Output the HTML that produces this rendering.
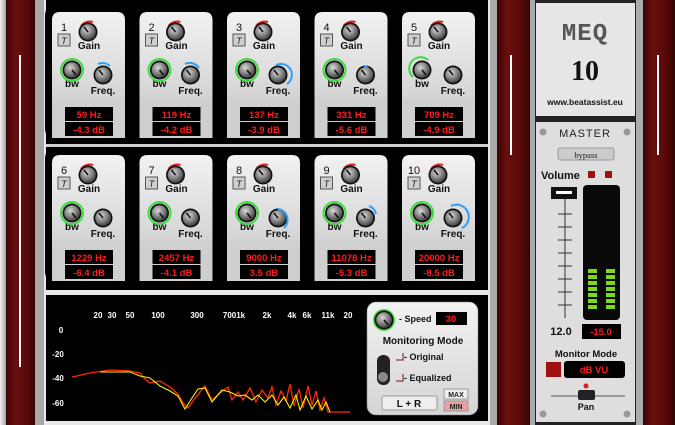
<!DOCTYPE html>
<html><head><meta charset="utf-8"><style>
html,body{margin:0;padding:0;background:#d8d8d8;}
svg{display:block;font-family:"Liberation Sans",Arial,sans-serif;}
.lbl{font-size:10px;font-weight:bold;fill:#111;text-anchor:middle}
.num{font-size:11px;fill:#111;text-anchor:middle}
.red{font-size:9.5px;fill:#ff1a1a;font-weight:bold;text-anchor:middle}
.ax{font-size:8px;fill:#fff;font-weight:bold;text-anchor:middle}
</style></head><body>
<svg width="675" height="425" viewBox="0 0 675 425" xmlns="http://www.w3.org/2000/svg">
<defs>
<linearGradient id="wood" x1="0" x2="1"><stop offset="0" stop-color="#3a0404"/><stop offset=".3" stop-color="#6a0e0e"/><stop offset=".7" stop-color="#5a0a0a"/><stop offset="1" stop-color="#340303"/></linearGradient>
<linearGradient id="metal" x1="0" x2="0" y1="0" y2="1"><stop offset="0" stop-color="#f2f2f2"/><stop offset="1" stop-color="#d4d4d4"/></linearGradient>
<linearGradient id="side" x1="0" x2="1"><stop offset="0" stop-color="#f0f0f0"/><stop offset="1" stop-color="#9a9a9a"/></linearGradient>
<radialGradient id="kn" cx=".4" cy=".35" r=".7"><stop offset="0" stop-color="#d8d8d8"/><stop offset=".6" stop-color="#7a7a7a"/><stop offset="1" stop-color="#3a3a3a"/></radialGradient>
<g id="knob"><circle r="9.5" fill="#111"/><circle r="7.8" fill="url(#kn)"/><line x1="0" y1="0" x2="-4" y2="-5" stroke="#111" stroke-width="1.6"/></g>
<g id="knobr"><circle r="9.5" fill="#111"/><circle r="7.8" fill="url(#kn)"/><line x1="0" y1="0" x2="4" y2="5" stroke="#111" stroke-width="1.6"/></g>
<g id="mod">
<rect x="-7" y="-7" width="88" height="134" rx="10" fill="#000"/>
<path d="M0,86 V8 Q0,0 8,0 H65 Q73,0 73,8 V86 Z" fill="url(#metal)"/>
<rect x="0" y="86" width="73" height="40" fill="#cfcfcf"/>
<rect x="13" y="95" width="48" height="14" fill="#000"/>
<rect x="13" y="110" width="48" height="14" fill="#000"/>
<rect x="6" y="22" width="12" height="12" fill="#d0d0d0" stroke="#555" stroke-width="1"/>
<text x="12" y="32" font-size="9" font-style="italic" text-anchor="middle" fill="#222">T</text>
<path d="M29,14 A11,11 0 0 1 41,10" stroke="#e02020" stroke-width="2" fill="none"/>
<use href="#knob" x="36" y="20"/>
<text class="lbl" x="37" y="37">Gain</text>
<use href="#knobr" x="20" y="58"/>
<text class="lbl" x="20" y="75">bw</text>
<use href="#knob" x="51" y="63"/>
<text class="lbl" x="51" y="82">Freq.</text>
</g>
</defs>

<rect x="0" y="0" width="675" height="425" fill="#d4d4d4"/>
<rect x="0" y="0" width="7" height="425" fill="url(#side)"/>
<rect x="6" y="0" width="29" height="425" fill="url(#wood)"/>
<rect x="35" y="0" width="9" height="425" fill="#a8a8a8"/>
<rect x="19" y="55" width="2" height="312" fill="#fff"/>
<rect x="44" y="0" width="446" height="425" fill="#e8e8e8"/>
<rect x="46" y="0" width="442" height="421" fill="#000"/>
<rect x="46" y="144" width="442" height="3" fill="#cfcfcf"/>
<rect x="46" y="290" width="442" height="5" fill="#e8e8e8"/>
<rect x="490" y="0" width="45" height="425" fill="#aaa"/>
<rect x="497" y="0" width="33" height="425" fill="url(#wood)"/>
<rect x="510" y="55" width="2" height="100" fill="#fff"/>
<rect x="636" y="0" width="39" height="425" fill="#aaa"/>
<rect x="643" y="0" width="32" height="425" fill="url(#wood)"/>
<rect x="657" y="55" width="2" height="100" fill="#fff"/>

<use href="#mod" x="52" y="12"/><use href="#mod" x="139.5" y="12"/><use href="#mod" x="227" y="12"/><use href="#mod" x="314.5" y="12"/><use href="#mod" x="402" y="12"/>
<use href="#mod" x="52" y="155"/><use href="#mod" x="139.5" y="155"/><use href="#mod" x="227" y="155"/><use href="#mod" x="314.5" y="155"/><use href="#mod" x="402" y="155"/>
<g fill="none" stroke="#3ddc3d" stroke-width="2">
<circle cx="72" cy="70" r="11"/><circle cx="159.5" cy="70" r="11"/><circle cx="247" cy="70" r="11"/><circle cx="334.5" cy="70" r="11"/><path d="M413,77 A11,11 0 0 1 428,60"/>
<circle cx="72" cy="213" r="11"/><circle cx="159.5" cy="213" r="11"/><circle cx="247" cy="213" r="11"/><circle cx="334.5" cy="213" r="11"/><circle cx="422" cy="213" r="11"/>
</g>
<g fill="none" stroke="#2aa0ff" stroke-width="2">
<path d="M98,64 A11,11 0 0 1 110,66"/><path d="M185,64 A11,11 0 0 1 199,68"/><path d="M276,65 A11,11 0 0 1 287,84"/><path d="M364,66 A11,11 0 0 1 368,68"/>
<path d="M369,206 A11,11 0 0 1 376,214"/><path d="M278,209 A11,11 0 0 1 284,228"/><path d="M451,206 A11,11 0 0 1 462,228"/>
</g>
<text class="num" x="64" y="31">1</text><text class="num" x="151.5" y="31">2</text><text class="num" x="239" y="31">3</text><text class="num" x="326.5" y="31">4</text><text class="num" x="414" y="31">5</text>
<text class="num" x="64" y="174">6</text><text class="num" x="151.5" y="174">7</text><text class="num" x="239" y="174">8</text><text class="num" x="326.5" y="174">9</text><text class="num" x="414" y="174">10</text>
<text class="red" x="89" y="118">59 Hz</text><text class="red" x="89" y="133">-4.3 dB</text>
<text class="red" x="176.5" y="118">119 Hz</text><text class="red" x="176.5" y="133">-4.2 dB</text>
<text class="red" x="264" y="118">137 Hz</text><text class="red" x="264" y="133">-3.9 dB</text>
<text class="red" x="351.5" y="118">331 Hz</text><text class="red" x="351.5" y="133">-5.6 dB</text>
<text class="red" x="439" y="118">709 Hz</text><text class="red" x="439" y="133">-4.9 dB</text>
<text class="red" x="89" y="261">1229 Hz</text><text class="red" x="89" y="276">-6.4 dB</text>
<text class="red" x="176.5" y="261">2457 Hz</text><text class="red" x="176.5" y="276">-4.1 dB</text>
<text class="red" x="264" y="261">9000 Hz</text><text class="red" x="264" y="276">3.5 dB</text>
<text class="red" x="351.5" y="261">11078 Hz</text><text class="red" x="351.5" y="276">-5.3 dB</text>
<text class="red" x="439" y="261">20000 Hz</text><text class="red" x="439" y="276">-8.5 dB</text>

<text class="ax" x="98" y="318">20</text><text class="ax" x="112" y="318">30</text><text class="ax" x="130" y="318">50</text><text class="ax" x="158" y="318">100</text><text class="ax" x="197" y="318">300</text><text class="ax" x="234" y="318">7001k</text><text class="ax" x="267" y="318">2k</text><text class="ax" x="292" y="318">4k</text><text class="ax" x="307" y="318">6k</text><text class="ax" x="328" y="318">11k</text><text class="ax" x="348" y="318">20</text>
<text class="ax" x="61" y="333">0</text><text class="ax" x="58" y="357">-20</text><text class="ax" x="58" y="381">-40</text><text class="ax" x="58" y="406">-60</text>
<polyline fill="none" stroke="#ff2a00" stroke-width="1.3" points="72,377 90,373 110,370 130,371 140,373 145,379 150,383 160,381 170,387 178,394 183,403 188,408 193,401 200,392 205,386 212,400 220,393 228,387 232,400 238,392 243,400 250,388 256,402 262,390 268,398 272,387 276,405 281,391 286,401 290,384 294,406 299,389 303,408 308,386 312,405 316,391 320,410 324,398 328,412 333,412 350,412"/>
<polyline fill="none" stroke="#ffee00" stroke-width="1.1" points="100,372 130,372 140,376 150,378 160,386 170,391 178,396 185,409 190,401 198,389 205,388 212,402 222,390 230,392 238,396 245,395 252,400 258,395 265,402 272,395 278,405 284,397 290,408 296,395 300,410 306,396 312,409 318,400 322,410 326,402 330,412"/>
<rect x="367" y="302" width="111" height="113" rx="9" fill="url(#metal)" stroke="#888" stroke-width="0.6"/>
<circle cx="384" cy="320" r="10" fill="none" stroke="#3ddc3d" stroke-width="2"/>
<use href="#knobr" x="384" y="320"/>
<text x="399" y="322" font-size="9" font-weight="bold" fill="#111">- Speed</text>
<rect x="436" y="312" width="31" height="13" fill="#000"/>
<text class="red" x="451" y="322">30</text>
<text class="lbl" x="423" y="344" font-size="9">Monitoring Mode</text>
<rect x="377" y="355" width="13" height="30" rx="6" fill="#222"/>
<circle cx="383" cy="377" r="5" fill="#888"/>
<path d="M396,360 H403 V353" stroke="#7a1010" stroke-width="1" fill="none"/>
<text x="404" y="360" font-size="9" font-weight="bold" fill="#111">- Original</text>
<path d="M396,381 H403 V374" stroke="#7a1010" stroke-width="1" fill="none"/>
<text x="404" y="381" font-size="9" font-weight="bold" fill="#111">- Equalized</text>
<rect x="382" y="396" width="55" height="14" rx="2" fill="#eee" stroke="#999"/>
<text class="lbl" x="409" y="407" font-size="9">L + R</text>
<rect x="444" y="389" width="24" height="10" fill="#eee" stroke="#999"/>
<text x="456" y="397" font-size="7" font-weight="bold" text-anchor="middle" fill="#222">MAX</text>
<rect x="444" y="401" width="24" height="10" fill="#e8a0a0" stroke="#999"/>
<text x="456" y="409" font-size="7" font-weight="bold" text-anchor="middle" fill="#222">MIN</text>

<rect x="535" y="0" width="101" height="425" fill="#222"/>
<rect x="536" y="3" width="99" height="113" fill="#e6e6e6"/>
<text x="585" y="40" font-size="24" font-weight="bold" text-anchor="middle" fill="#555" letter-spacing="1" font-family="Liberation Mono,monospace">MEQ</text>
<text x="585" y="80" font-size="28" font-weight="bold" text-anchor="middle" fill="#111" font-family="Liberation Serif,serif">10</text>
<text x="585" y="105" font-size="8.5" font-weight="bold" text-anchor="middle" fill="#111">www.beatassist.eu</text>
<rect x="536" y="122" width="99" height="300" fill="#dedede"/>
<circle cx="543" cy="132" r="3.5" fill="#999"/><circle cx="627" cy="132" r="3.5" fill="#999"/>
<circle cx="543" cy="414" r="3.5" fill="#999"/><circle cx="627" cy="414" r="3.5" fill="#999"/>
<text x="585" y="137" font-size="11" text-anchor="middle" fill="#222" letter-spacing="1">MASTER</text>
<rect x="558" y="148" width="56" height="12" rx="2" fill="#ccc" stroke="#999"/>
<text x="586" y="158" font-size="8.5" text-anchor="middle" fill="#222" font-family="Liberation Serif,serif">bypass</text>
<text x="541" y="179" font-size="11" font-weight="bold" fill="#111">Volume</text>
<rect x="588" y="171" width="7" height="7" fill="#a01010"/><rect x="605" y="171" width="7" height="7" fill="#a01010"/>
<line x1="565" y1="196" x2="565" y2="318" stroke="#333"/>
<g stroke="#333"><line x1="558" y1="214" x2="572" y2="214"/><line x1="558" y1="227" x2="572" y2="227"/><line x1="558" y1="240" x2="572" y2="240"/><line x1="558" y1="253" x2="572" y2="253"/><line x1="558" y1="266" x2="572" y2="266"/><line x1="558" y1="279" x2="572" y2="279"/><line x1="558" y1="292" x2="572" y2="292"/><line x1="558" y1="305" x2="572" y2="305"/></g>
<rect x="551" y="187" width="26" height="12" fill="#111"/><rect x="556" y="191" width="16" height="3" fill="#fff"/>
<rect x="583" y="185" width="37" height="135" rx="4" fill="#0a0a0a"/>
<g fill="#7cd81c">
<rect x="588" y="269" width="9" height="4"/><rect x="588" y="275" width="9" height="4"/><rect x="588" y="281" width="9" height="4"/><rect x="588" y="287" width="9" height="4"/><rect x="588" y="293" width="9" height="4"/><rect x="588" y="299" width="9" height="4"/><rect x="588" y="305" width="9" height="4"/>
<rect x="606" y="269" width="9" height="4"/><rect x="606" y="275" width="9" height="4"/><rect x="606" y="281" width="9" height="4"/><rect x="606" y="287" width="9" height="4"/><rect x="606" y="293" width="9" height="4"/><rect x="606" y="299" width="9" height="4"/><rect x="606" y="305" width="9" height="4"/>
</g>
<text x="561" y="335" font-size="11" font-weight="bold" text-anchor="middle" fill="#111">12.0</text>
<rect x="582" y="324" width="39" height="15" fill="#000"/>
<text class="red" x="601" y="335">-15.0</text>
<text x="586" y="357" font-size="9.5" font-weight="bold" text-anchor="middle" fill="#111">Monitor Mode</text>
<rect x="546" y="362" width="15" height="15" fill="#a01010"/>
<rect x="564" y="361" width="61" height="17" rx="3" fill="#000"/>
<text class="red" x="594" y="373" font-size="10">dB VU</text>
<circle cx="586" cy="386" r="2.5" fill="#e02020"/>
<line x1="551" y1="396" x2="625" y2="396" stroke="#555"/>
<rect x="578" y="390" width="17" height="10" rx="2" fill="#222"/>
<text x="586" y="410" font-size="9" font-weight="bold" text-anchor="middle" fill="#111">Pan</text>
</svg>
</body></html>
